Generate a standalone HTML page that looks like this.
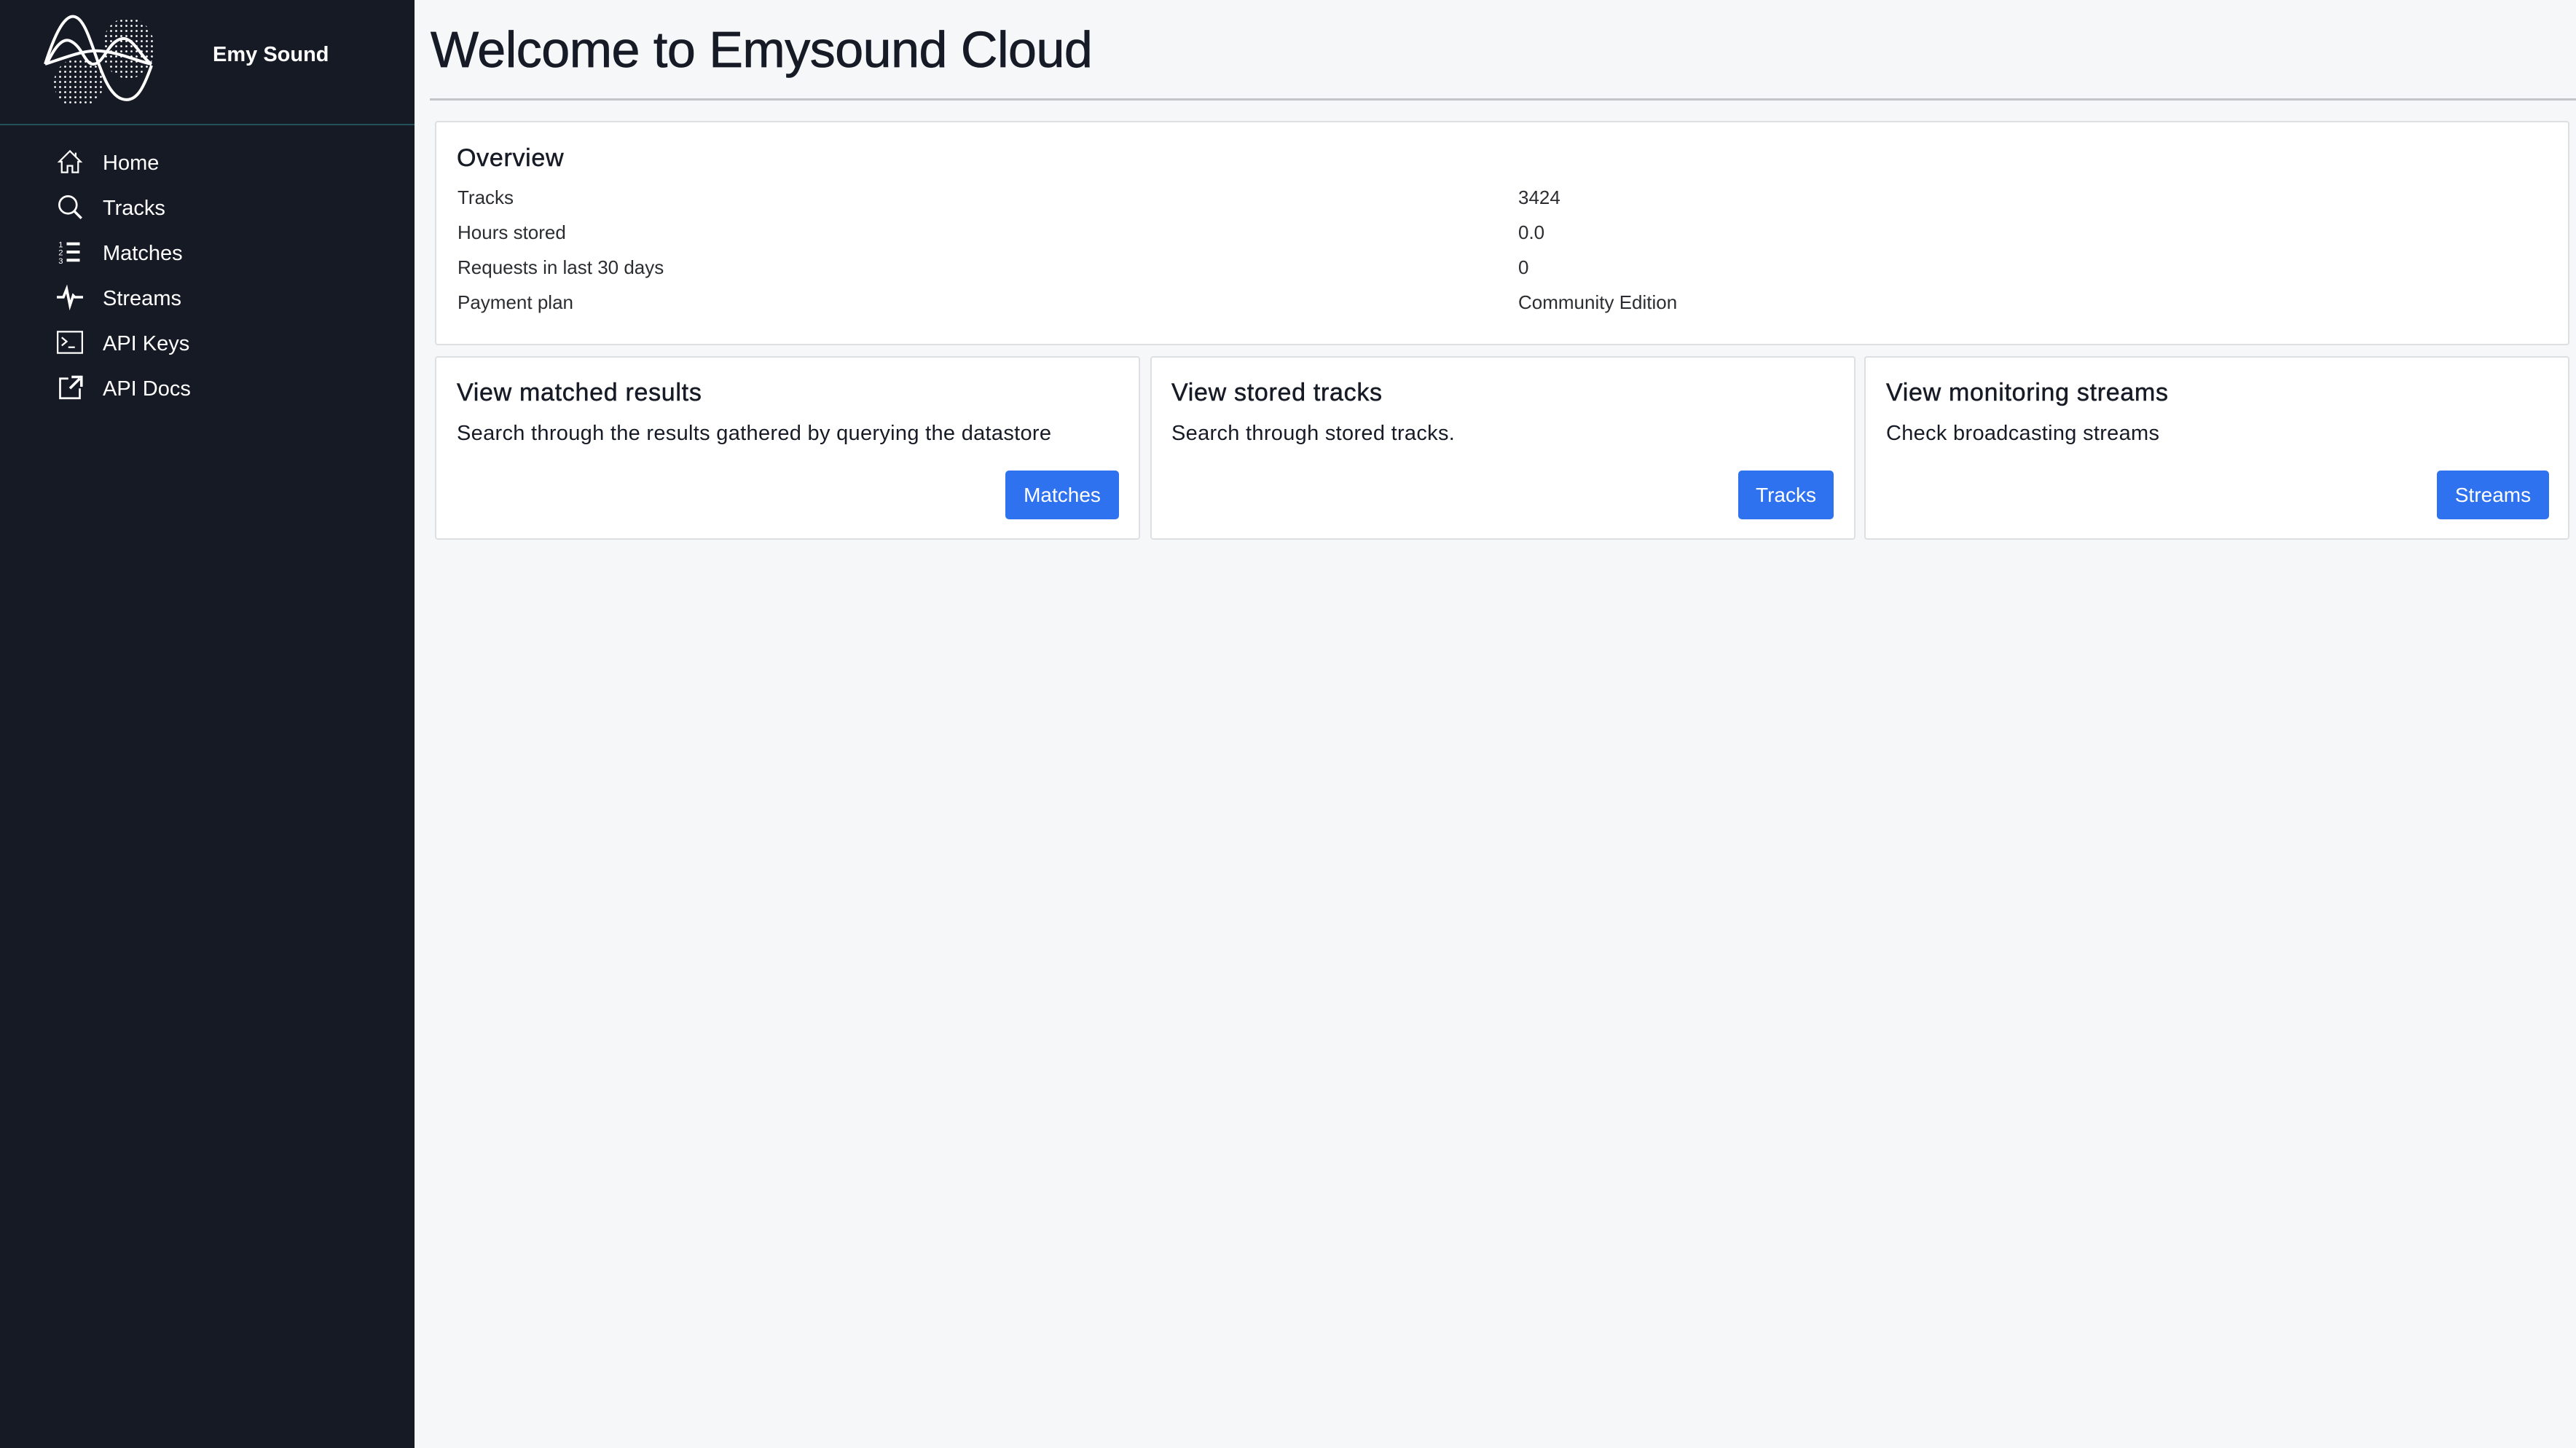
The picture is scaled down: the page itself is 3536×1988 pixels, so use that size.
<!DOCTYPE html>
<html><head><meta charset="utf-8"><style>
*{margin:0;padding:0;box-sizing:border-box}
body{width:3536px;height:1988px;background:#f6f7f9;font-family:"Liberation Sans",Arial,sans-serif;position:relative;overflow:hidden;color:#161b26}
.side{position:absolute;left:0;top:0;width:569px;height:1988px;background:#161a25}
.div{position:absolute;left:0;top:170px;width:569px;height:2px;background:#24505a}
.brand{position:absolute;left:292px;top:59px;font-size:29px;font-weight:bold;color:#fff}
.nav{position:absolute;left:141px;font-size:29px;color:#fff;line-height:36px}
.ic{position:absolute;left:78px;width:36px;height:36px}
.t{position:absolute;white-space:nowrap}
h1{position:absolute;left:591px;top:28px;font-size:70px;font-weight:normal;letter-spacing:-0.5px;color:#161b26;-webkit-text-stroke:0.8px #161b26}
.rule{position:absolute;left:590px;top:135px;width:2946px;height:3px;background:#c4c5c8}
.card{position:absolute;background:#fff;border:2px solid #dedfe1;border-radius:4px}
.lab{position:absolute;left:628px;font-size:26px;color:#2b2d31}
.val{position:absolute;left:2084px;font-size:26px;color:#2b2d31}
.ct{position:absolute;font-size:34px;color:#161b26;letter-spacing:0.7px;-webkit-text-stroke:0.5px #161b26}
.cd{position:absolute;font-size:29px;color:#161b26;letter-spacing:0.3px}
.btn{position:absolute;top:646px;height:67px;background:#2f72ef;border-radius:5px;color:#fff;font-size:28px;text-align:center;line-height:67px}
</style></head><body>
<div class="side">
<svg style="position:absolute;left:58px;top:18px" width="160" height="126" viewBox="0 0 160 126">
<defs><pattern id="d" width="7" height="7" patternUnits="userSpaceOnUse"><circle cx="3.5" cy="3.5" r="1.4" fill="#fff"/></pattern></defs>
<ellipse cx="118" cy="48" rx="36" ry="42" fill="url(#d)"/>
<ellipse cx="50" cy="96" rx="34" ry="34" fill="url(#d)"/>
<path d="M4 70 C20 20 35 -5 50 8 C70 25 80 110 110 118 C130 124 140 100 150 72" fill="none" stroke="#fff" stroke-width="4"/>
<path d="M6 70 C18 45 28 34 38 38 C55 45 58 70 70 70 M70 70 C85 70 90 38 110 35 C125 33 135 60 150 70" fill="none" stroke="#fff" stroke-width="4"/>
<path d="M4 70 C40 58 60 50 80 52 C110 55 130 66 150 70" fill="none" stroke="#fff" stroke-width="4"/>
</svg>
<div class="brand">Emy Sound</div>
<div class="div"></div>
<svg class="ic" style="top:204px" viewBox="0 0 16 16"><path d="M8 1.5 1.5 8h1.5v6.5h3.5v-4h3v4h3.5V8h1.5L8 1.5zM11.5 2.5v2.5" fill="none" stroke="#fff" stroke-width="1"/></svg>
<div class="nav" style="top:206px">Home</div>
<svg class="ic" style="top:266px" viewBox="0 0 16 16"><circle cx="6.8" cy="6.8" r="5.3" fill="none" stroke="#fff" stroke-width="1.2"/><path d="M10.7 10.7 15 15" stroke="#fff" stroke-width="1.5"/></svg>
<div class="nav" style="top:268px">Tracks</div>
<svg class="ic" style="top:328px" viewBox="0 0 16 16"><path d="M6 3h8M6 8h8M6 13h8" stroke="#fff" stroke-width="1.8"/><text x="1" y="5" font-size="5" fill="#fff" font-family="Liberation Sans">1</text><text x="1" y="10" font-size="5" fill="#fff" font-family="Liberation Sans">2</text><text x="1" y="15" font-size="5" fill="#fff" font-family="Liberation Sans">3</text></svg>
<div class="nav" style="top:330px">Matches</div>
<svg class="ic" style="top:390px" viewBox="0 0 16 16"><path d="M0 8h4l2-5 2 10 2-6 1 1h5" fill="none" stroke="#fff" stroke-width="1.6"/></svg>
<div class="nav" style="top:392px">Streams</div>
<svg class="ic" style="top:452px" viewBox="0 0 16 16"><rect x="0.5" y="1.5" width="15" height="13" fill="none" stroke="#fff" stroke-width="1"/><path d="M3 5l3 2.5-3 2.5M7 11h4" fill="none" stroke="#fff" stroke-width="1"/></svg>
<div class="nav" style="top:454px">API Keys</div>
<svg class="ic" style="top:513px" viewBox="0 0 16 16"><path d="M7 3H2v12h12V9" fill="none" stroke="#fff" stroke-width="1.2"/><path d="M8 9l6-6M9 2h6v6" fill="none" stroke="#fff" stroke-width="1.6"/></svg>
<div class="nav" style="top:516px">API Docs</div>
</div>

<h1>Welcome to Emysound Cloud</h1>
<div class="rule"></div>

<div class="card" style="left:597px;top:166px;width:2930px;height:308px"></div>
<div class="t ct" style="left:627px;top:198px">Overview</div>
<div class="t lab" style="top:256px">Tracks</div>
<div class="t lab" style="top:304px">Hours stored</div>
<div class="t lab" style="top:352px">Requests in last 30 days</div>
<div class="t lab" style="top:400px">Payment plan</div>
<div class="t val" style="top:256px">3424</div>
<div class="t val" style="top:304px">0.0</div>
<div class="t val" style="top:352px">0</div>
<div class="t val" style="top:400px">Community Edition</div>

<div class="card" style="left:597px;top:489px;width:968px;height:252px"></div>
<div class="card" style="left:1579px;top:489px;width:968px;height:252px"></div>
<div class="card" style="left:2559px;top:489px;width:968px;height:252px"></div>

<div class="t ct" style="left:627px;top:520px">View matched results</div>
<div class="t cd" style="left:627px;top:579px">Search through the results gathered by querying the datastore</div>
<div class="btn" style="left:1380px;width:156px">Matches</div>

<div class="t ct" style="left:1608px;top:520px">View stored tracks</div>
<div class="t cd" style="left:1608px;top:579px">Search through stored tracks.</div>
<div class="btn" style="left:2386px;width:131px">Tracks</div>

<div class="t ct" style="left:2589px;top:520px">View monitoring streams</div>
<div class="t cd" style="left:2589px;top:579px">Check broadcasting streams</div>
<div class="btn" style="left:3345px;width:154px">Streams</div>
</body></html>
